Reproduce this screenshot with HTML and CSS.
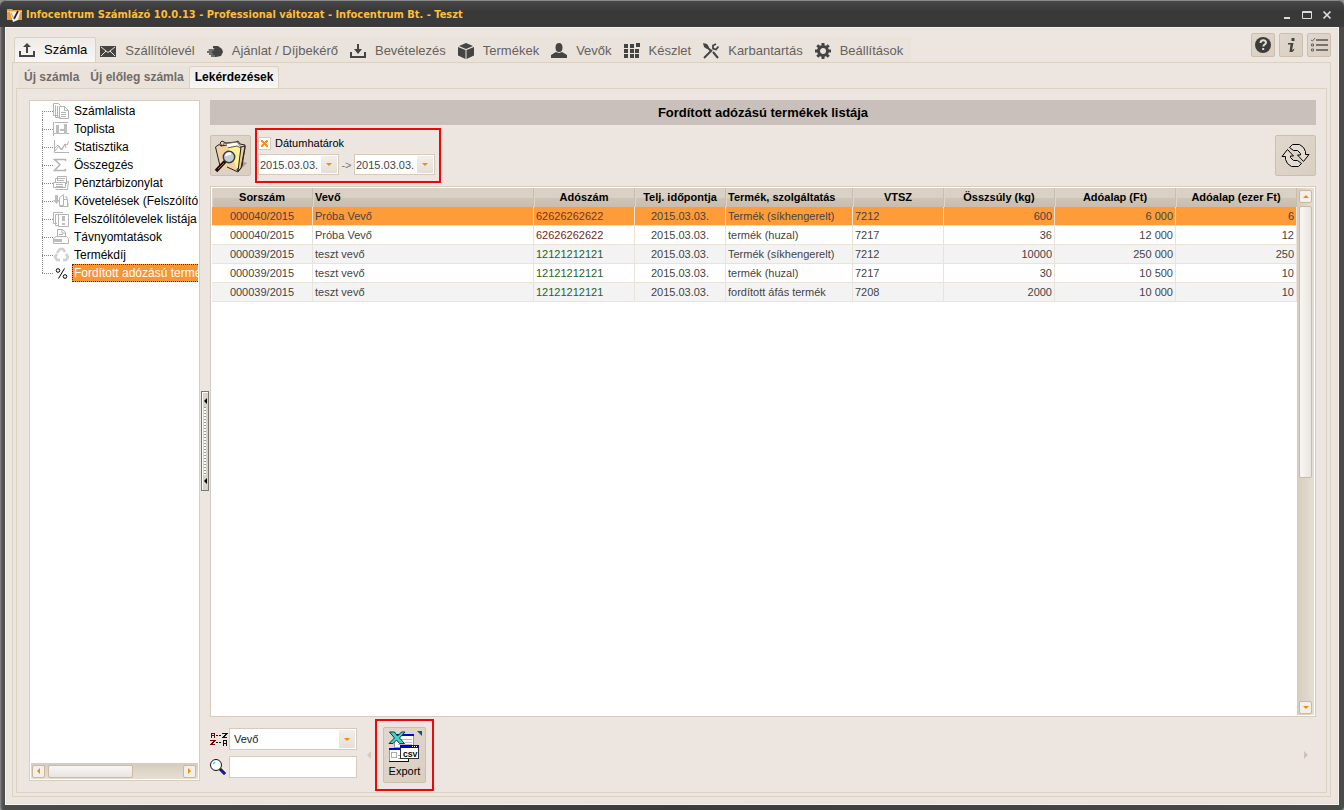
FILE: index.html
```html
<!DOCTYPE html>
<html lang="hu">
<head>
<meta charset="utf-8">
<title>Infocentrum Számlázó</title>
<link rel="stylesheet" href="styles.css">
</head>
<body>
<div class="window">
  <header class="titlebar">
    <svg class="app-icon" width="16" height="16" viewBox="0 0 16 16"><path d="M0 2h5l1 1h9v10H0z" fill="#f39a2e"/><path d="M0 4h15v1H0z" fill="#ffd08a"/><path d="M3 5h10l-2 8-5 2z" fill="#f4f4f4"/><path d="M11 4L7 12" stroke="#222" stroke-width="1.700"/><path d="M4 6l3 6" stroke="#999"/></svg>
    <span class="title">Infocentrum Számlázó 10.0.13 - Professional változat - Infocentrum Bt. - Teszt</span>
    <div class="win-buttons">
      <button type="button" aria-label="Kis méret"><svg width="10" height="10" viewBox="0 0 10 10"><path d="M2 7h6v2H2z" fill="#ddd"/></svg></button>
      <button type="button" aria-label="Teljes méret"><svg width="10" height="10" viewBox="0 0 10 10"><path d="M.5 1.500h9v7h-9zM0 2.500h10" fill="none" stroke="#ddd"/></svg></button>
      <button type="button" aria-label="Bezárás"><svg width="10" height="10" viewBox="0 0 10 10"><path d="M1.500 1.500l7 7m0-7l-7 7" stroke="#ddd" stroke-width="1.700"/></svg></button>
    </div>
  </header>
  <div class="client">
    <div class="menu-row">
      <nav class="main-nav">
        <a href="#" class="active"><svg viewBox="0 0 16 16"><path d="M8 1l4 4H9v6H7V5H4zM0 9h2v4h12V9h2v6H0z"/></svg>Számla</a>
        <a href="#"><svg viewBox="0 0 16 16"><path d="M0 3h16v11H0z"/><path d="M1 4l7 5.500L15 4M1 13l5-5M15 13l-5-5" stroke="#e9e3da" fill="none"/></svg>Szállítólevél</a>
        <a href="#"><svg viewBox="0 0 16 16"><path d="M6 3l5 0 4 3 1 3-2 4-5 1H4v-2H2v-2H0V8h2V6h6L6 5z"/><path d="M1 7h6M0 9h5M2 11h4M4 13h4" stroke="#9d9995"/></svg>Ajánlat / Díjbekérő</a>
        <a href="#"><svg viewBox="0 0 16 16"><path d="M7 1h2v5h3l-4 5-4-5h3zM0 9h2v4h12V9h2v6H0z"/></svg>Bevételezés</a>
        <a href="#"><svg viewBox="0 0 16 16"><path d="M8 0l7 3-7 3-7-3zM0 4l7.500 3v9L0 12.500zM16 4L8.500 7v9l7.500-3.500z"/></svg>Termékek</a>
        <a href="#"><svg viewBox="0 0 16 16"><ellipse cx="8" cy="4.500" rx="3.500" ry="4.500"/><path d="M0 15v-3l5-3 3 1 3-1 5 3v3z"/></svg>Vevők</a>
        <a href="#"><svg viewBox="0 0 16 16"><path d="M0 1h4v4H0zM6 1h4v4H6zM12 0h4v4h-4zM0 6h4v4H0zM6 6h4v4H6zM11 6h4v4h-4zM0 11h4v4H0zM6 11h4v4H6zM11 11h4v4h-4z"/></svg>Készlet</a>
        <a href="#"><svg viewBox="0 0 16 16"><path d="M0 0l4 1 2 3-2 2L1 4z"/><path d="M4 4l4 4M10 9l5 6M1 15l8-8" stroke="#444" stroke-width="2"/><path d="M13 1l-3 1.500v3l3 1 2.500-3" fill="none" stroke="#444" stroke-width="1.800"/></svg>Karbantartás</a>
        <a href="#"><svg viewBox="0 0 16 16"><circle cx="8" cy="8" r="4.500" fill="none" stroke="#444" stroke-width="3"/><path d="M8 0v3M8 13v3M0 8h3M13 8h3M2.300 2.300l2 2M11.700 11.700l2 2M13.700 2.300l-2 2M4.300 11.700l-2 2" stroke="#444" stroke-width="3"/></svg>Beállítások</a>
      </nav>
      <div class="help-buttons">
        <button type="button" class="tool" aria-label="Súgó"><svg width="18" height="18" viewBox="0 0 18 18"><circle cx="9" cy="9" r="8" fill="#3e3c3a"/><path d="M6.500 7c0-3.500 5.500-3.500 5.500-.5 0 2-2.700 2-2.700 4" stroke="#e3dbcf" stroke-width="2" fill="none"/><path d="M8.200 12h2v2h-2z" fill="#e3dbcf"/></svg></button>
        <button type="button" class="tool" aria-label="Információ"><svg width="18" height="18" viewBox="0 0 18 18"><path d="M9.500 2h3v3h-3zM6 7h5.500L10 14l2.500-1.500-1 2.500-1.500 1H7.500L8.500 8.500H6z" fill="#444"/></svg></button>
        <button type="button" class="tool" aria-label="Lista"><svg width="18" height="18" viewBox="0 0 18 18"><path d="M6 4h12M6 9h12M6 14h12" stroke="#555" stroke-width="1.500"/><path d="M1 4l1.500 1L5 2M1.500 8h2v2h-2zM1.500 13h2v2h-2z" fill="none" stroke="#666"/></svg></button>
      </div>
    </div>
    <div class="outer-panel">
      <nav class="sub-nav">
        <a href="#">Új számla</a>
        <a href="#">Új előleg számla</a>
        <a href="#" class="active">Lekérdezések</a>
      </nav>
      <div class="inner-panel">
        <aside class="tree">
          <ul>
            <li><a href="#"><svg viewBox="0 0 16 16"><path d="M5.500 12.500h-5v-12h5l2 2M7.500 14.500h-5v-12M6.500 3.500h5l4 4v8h-9zM11.500 3.500v4h4M8 9.500h5M8 11.500h5M8 13.500h5M4.500 3v12"/></svg><span>Számlalista</span></a></li>
            <li><a href="#"><svg viewBox="0 0 16 16"><path d="M.5 1v14M0 12.500h16M2 1.500h13"/><path class="solid" d="M3 4h3v9H3zM7 8h4v2H7zM11 3h3v10h-3z"/></svg><span>Toplista</span></a></li>
            <li><a href="#"><svg viewBox="0 0 16 16"><path d="M1.500 1v12.500H16M2 12l4-5 3 4 3-6 2 1 2-4M2 9l3-3 3 5 4-6 1 4"/></svg><span>Statisztika</span></a></li>
            <li><a href="#"><svg viewBox="0 0 16 16"><path d="M12.500 4V2.500h-11l5.500 5-5.500 6h11V12" stroke-width="1.500"/></svg><span>Összegzés</span></a></li>
            <li><a href="#"><svg viewBox="0 0 16 16"><path d="M4.500 6V1.500h9V9M2.500 8V3.500h9M6 3.500h6M5 5.500h6M.5 7.500h12v5h-12zM2.500 14.500h12l1-8-3 1M3 9.500h7M3 11.500h7"/></svg><span>Pénztárbizonylat</span></a></li>
            <li><a href="#"><svg viewBox="0 0 16 16"><path class="solid" d="M2 2h3v5h2l-3.500 4L0 7h2z"/><path d="M6.500 4.500l4-3v11h-4zM10.500 6.500h4v7h-8M12 4h2v2M9 13.500h6v-4"/></svg><span>Követelések (Felszólító levelek)</span></a></li>
            <li><a href="#"><svg viewBox="0 0 16 16"><path d="M4 12.500H.5v-11H10M6 14.500H2.500v-11h4M5.500 3.500h10v12h-10z"/><path class="solid" d="M9 5h3v5H9zM9 12h3v2H9z"/></svg><span>Felszólítólevelek listája</span></a></li>
            <li><a href="#"><svg viewBox="0 0 16 16"><path d="M4.500 8V.5h5l3 3V8M9 1v3h3M6 5.500h4M.5 9.500l3-2h10l2 2v5H.5z"/><path class="solid" d="M1 10h8v3H1z"/></svg><span>Távnyomtatások</span></a></li>
            <li><a href="#"><svg viewBox="0 0 16 16"><path d="M4 6l3-4h3l2 3M13 7l2 3-2 3h-3M7 13H4L2 10l2-3" stroke-width="2.500" stroke="#d0d0d0"/></svg><span>Termékdíj</span></a></li>
            <li><a href="#" class="selected"><svg viewBox="0 0 16 16"><path d="M11.500 3.500l-6 10" stroke="#000"/><circle cx="5" cy="5.500" r="1.800" stroke="#000"/><circle cx="12" cy="11.500" r="1.800" stroke="#000"/></svg><span>Fordított adózású termékek listája</span></a></li>
          </ul>
          <div class="scroll-h">
            <button type="button" aria-label="Balra"><i class="tri left"></i></button>
            <div class="thumb"></div>
            <button type="button" class="end" aria-label="Jobbra"><i class="tri right"></i></button>
          </div>
        </aside>
        <div class="splitter"><div class="grip"><i></i><b></b><i></i></div></div>
        <main class="content">
          <h1>Fordított adózású termékek listája</h1>
          <div class="toolbar">
            <button type="button" class="tool big" aria-label="Keresés">
              <svg width="34" height="34" viewBox="0 0 34 34"><path d="M27 22l6 2-7 7z" fill="#a79f94"/><path d="M6 4l2-2 4 2 10-1 2-1 2 3 5 1v3l-3 18-4 5z" fill="#f3d3a6" stroke="#222"/><path d="M9 5l14-2 4 5-2 22-6-2z" fill="#fffef0" stroke="#666"/><path d="M13 9l10-2 4 2v18l-5 4z" fill="#fdf391" stroke="#555"/><path d="M27 8l4-1-4 22-3 3z" fill="#f3cd9b" stroke="#222"/><path d="M1.500 8L5 6l2 1 6-1 10 24-2 2-14-4z" fill="#f3cfa4"/><path d="M6 27L1.500 8 5 5.500l2 1.500 6-1M13 28l11 5 3-4" fill="none" stroke="#222"/><circle cx="15" cy="18" r="5.700" fill="#c6ccd2" stroke="#3d3d3d" stroke-width="1.500"/><path d="M12 17q1-3 5-2" stroke="#fff" stroke-width="2.500" fill="none"/><path d="M11 22.500L2 32" stroke="#111" stroke-width="3.500"/><path d="M10 24l-6 6" stroke="#c0562c"/></svg>
            </button>
            <div class="marked filter">
              <label class="check"><input type="checkbox" checked>Dátumhatárok</label>
              <div class="range">
                <span class="combo date"><select aria-label="Kezdő dátum"><option>2015.03.03.</option></select><i class="drop"></i></span>
                <span class="to">-&gt;</span>
                <span class="combo date"><select aria-label="Záró dátum"><option>2015.03.03.</option></select><i class="drop"></i></span>
              </div>
            </div>
            <button type="button" class="tool big refresh" aria-label="Frissítés">
              <svg width="29" height="23" viewBox="-.5 -.5 29 23"><g fill="#e4dcd0" stroke="#000"><path d="M8 3l3-3h7l4 3 2 4v3h3.500L22 17l-6-6.500h3V9l-3-3h-4z"/><path d="M20 19l-3 3h-7l-4-3-2-4v-3H.5L6 5l6 6.500H9V13l3 3h4z"/></g></svg>
            </button>
          </div>
          <div class="grid">
            <div class="table-area">
              <table>
                <colgroup><col class="w101"><col><col class="w101"><col class="w91"><col class="w127"><col class="w91"><col class="w111"><col class="w121"><col class="w121"></colgroup>
                <thead><tr><th>Sorszám</th><th class="l">Vevő</th><th>Adószám</th><th>Telj. időpontja</th><th class="l">Termék, szolgáltatás</th><th>VTSZ</th><th>Összsúly (kg)</th><th>Adóalap (Ft)</th><th>Adóalap (ezer Ft)</th></tr></thead>
                <tbody>
                  <tr class="current"><td class="c">000040/2015</td><td>Próba Vevő</td><td class="red">62626262622</td><td class="c">2015.03.03.</td><td>Termék (síkhengerelt)</td><td>7212</td><td class="r">600</td><td class="r">6 000</td><td class="r">6</td></tr>
                  <tr><td class="c">000040/2015</td><td>Próba Vevő</td><td class="red">62626262622</td><td class="c">2015.03.03.</td><td>termék (huzal)</td><td>7217</td><td class="r">36</td><td class="r">12 000</td><td class="r">12</td></tr>
                  <tr><td class="c">000039/2015</td><td>teszt vevő</td><td class="green">12121212121</td><td class="c">2015.03.03.</td><td>Termék (síkhengerelt)</td><td>7212</td><td class="r">10000</td><td class="r">250 000</td><td class="r">250</td></tr>
                  <tr><td class="c">000039/2015</td><td>teszt vevő</td><td class="green">12121212121</td><td class="c">2015.03.03.</td><td>termék (huzal)</td><td>7217</td><td class="r">30</td><td class="r">10 500</td><td class="r">10</td></tr>
                  <tr><td class="c">000039/2015</td><td>teszt vevő</td><td class="green">12121212121</td><td class="c">2015.03.03.</td><td>fordított áfás termék</td><td>7208</td><td class="r">2000</td><td class="r">10 000</td><td class="r">10</td></tr>
                </tbody>
              </table>
            </div>
            <div class="scroll-v">
              <button type="button" aria-label="Fel"><i class="tri up"></i></button>
              <div class="thumb"></div>
              <button type="button" class="end" aria-label="Le"><i class="tri down"></i></button>
            </div>
          </div>
          <footer class="bottom">
            <div class="finder">
              <label for="sort" aria-label="Rendezés"><svg width="18" height="16" viewBox="0 0 18 16" fill="none" shape-rendering="crispEdges"><path d="M1.500 7V2.500h3V7M1 4.500h4M0 9.500h5L1 13.500h4" stroke="#800000"/><path d="M12 2.500h5l-4 4h4M13.500 15v-5.500h3V15M13 12.500h4M6 4.500h2M9 4.500h2M6 11.500h2M9 11.500h2" stroke="#111"/></svg></label>
              <span class="combo"><select id="sort"><option>Vevő</option></select><i class="drop"></i></span>
              <label for="search" aria-label="Keresés"><svg width="18" height="18" viewBox="0 0 18 18"><circle cx="6" cy="7" r="5.500" fill="#fff" stroke="#111"/><path d="M3 6l2-2" stroke="#35d5ee" stroke-width="1.500"/><path d="M10 11l5 5" stroke="#111" stroke-width="3"/><path d="M11 12l4 4" stroke="#1c1cb4" stroke-width="2"/></svg></label>
              <input id="search" type="text">
            </div>
            <i class="page prev"></i>
            <div class="marked export-box">
              <button type="button" class="tool export">
                <svg width="34" height="34" viewBox="0 0 34 34"><g shape-rendering="crispEdges"><path d="M6 4h20v14H6z" fill="#fff"/><path d="M6.500 4.500h19v13h-19z" fill="none" stroke="#999"/><path d="M6 4h20v2H6z" fill="#0000e0"/><path d="M10 9.500h14M17 12.500h7M10 14.500h14" stroke="#b8b8b8"/><path d="M1.500 18.500h19v13h-19z" fill="#fff" stroke="#999"/><path d="M1 18h12v2H1z" fill="#0000e0"/><path d="M3.500 22.500h5v5h-5zM10 25.500h8M10 28.500h8" stroke="#aaa" fill="none"/><path d="M20.500 29v2.500H1" stroke="#111" fill="none"/><path d="M12.500 17.500h18v11h-18z" fill="#fff" stroke="#333"/><path d="M12 15h19v3H12z" fill="#0000e0"/><path d="M24 16.500h1M26 16.500h1M28 16.500h1" stroke="#fff"/></g><path d="M29 1h5v5z" fill="#14507c"/><text x="15" y="27" class="csv">CSV</text><path d="M1.500 2h5l3 4 4-4H17l-5.500 6 5 5.500h-5L8.500 10 5 13.500H1L6.500 8z" fill="#45cfc8" stroke="#053c3c"/></svg>
                Export
              </button>
            </div>
            <i class="page next"></i>
          </footer>
        </main>
      </div>
    </div>
  </div>
</div>
</body>
</html>
```
FILE: styles.css
```css
* { box-sizing: border-box; }
body {
  margin: 0;
  font: 11px/14px "Liberation Sans", Arial, sans-serif;
  color: #000;
  background: #8f9090;
}
button, select, input { font: inherit; color: inherit; margin: 0; }
button { padding: 0; cursor: pointer; }
a { color: inherit; text-decoration: none; }
svg { display: block; flex: none; }

.window {
  height: 100vh;
  min-height: 480px;
  display: flex;
  flex-direction: column;
  padding: 0 5px 5px;
  border-radius: 6px 6px 4px 4px;
  background: linear-gradient(90deg, #8a8a8a 0, #555 2px, #4a4a4a 5px, #3b3b3b 50%, #4a4a4a 100%);
}
.titlebar {
  height: 27px;
  flex: none;
  display: flex;
  align-items: center;
  gap: 3px;
  margin: 0 -5px;
  padding: 1px 12px 0 7px;
  border-top: 1px solid #8a8a8a;
  border-radius: 6px 6px 0 0;
  background: linear-gradient(#484848, #383838 40%, #3b3b3b);
}
.title {
  font: bold 11px/14px "DejaVu Sans Condensed", "DejaVu Sans", sans-serif;
  color: #fdbe3a;
}
.win-buttons { display: flex; gap: 10px; margin-left: auto; }
.win-buttons button { border: 0; background: none; }

.client {
  flex: 1;
  min-height: 0;
  display: flex;
  flex-direction: column;
  padding: 5px 7px 7px 6px;
  border: 1px solid #f8f5ee;
  background: #ede5df;
  box-shadow: inset 0 0 3px #e2dccd;
}
.menu-row { height: 29px; flex: none; display: flex; align-items: flex-end; justify-content: space-between; }
.main-nav { display: flex; padding-left: 2px; font-size: 13px; color: #66615e; }
.main-nav a {
  height: 26px;
  margin-bottom: -1px;
  display: flex;
  align-items: center;
  gap: 9px;
  padding: 0 8px 0 4px;
  border: 1px solid transparent;
  border-width: 1px 0 0;
  background: #eae3db;
}
.main-nav svg { width: 16px; height: 16px; fill: #444; }
.main-nav .active, .sub-nav .active {
  position: relative;
  color: #000;
  border: 1px solid #dbd1c1;
  border-radius: 2px 2px 0 0;
  background: linear-gradient(#efebe7, #f8f7f6);
}
.help-buttons { display: flex; gap: 4px; align-self: flex-start; }
.tool {
  width: 24px;
  height: 24px;
  display: flex;
  align-items: center;
  justify-content: center;
  border: 1px solid #cdbfad;
  border-radius: 2px;
  background: linear-gradient(135deg, #e0d8cc, #d9cfc1);
}
.tool.big { width: 41px; height: 41px; }

.outer-panel {
  flex: 1;
  min-height: 0;
  display: flex;
  flex-direction: column;
  padding: 3px;
  border: 1px solid #dcd2c3;
}
.sub-nav { display: flex; height: 22px; flex: none; padding-left: 2px; font-weight: bold; font-size: 12px; color: #716b68; }
.sub-nav a { height: 23px; padding: 0 5px 0 6px; line-height: 22px; background: #eae3db; }
.sub-nav .active { padding: 0 5px; line-height: 20px; z-index: 1; }
.inner-panel {
  flex: 1;
  min-height: 0;
  display: flex;
  padding: 11px 10px 0 12px;
  border: 1px solid #dcd2c3;
}

.tree {
  width: 171px;
  flex: none;
  display: flex;
  flex-direction: column;
  margin-bottom: 11px;
  padding: 1px;
  border: 1px solid #d8cebf;
  background: #fff;
}
.tree ul { flex: 1; min-height: 0; margin: 0; padding: 0 0 0 11px; overflow: hidden; list-style: none; }
.tree li {
  height: 18px;
  font-size: 12px;
  background:
    repeating-linear-gradient(#888 0 1px, transparent 1px 2px) 0 0 / 1px 100% no-repeat,
    repeating-linear-gradient(90deg, #888 0 1px, transparent 1px 2px) 0 9px / 11px 1px no-repeat;
}
.tree li:first-child { background-position: 0 9px, 0 9px; }
.tree li:last-child { background-size: 1px 9px, 11px 1px; }
.tree a { display: flex; align-items: center; gap: 3px; padding-left: 11px; }
.tree svg { width: 16px; height: 16px; fill: none; stroke: #b4b4b4; }
.tree .solid { fill: #bdbdbd; stroke: none; }
.tree a span {
  min-width: 0;
  height: 18px;
  overflow: hidden;
  padding-left: 1px;
  line-height: 18px;
  border-left: 1px solid transparent;
  white-space: nowrap;
}
.tree .selected span { color: #fff; line-height: 16px; border: 1px dotted #234; border-right: 0; background: #f79433; }

.scroll-h, .scroll-v { flex: none; display: flex; gap: 3px; background: linear-gradient(#d5ccbd, #e6dfd2); }
.scroll-h { height: 16px; align-items: center; padding: 0 2px 0 1px; }
.scroll-v { width: 17px; flex-direction: column; align-items: center; padding: 2px 0 1px; background: linear-gradient(90deg, #d5ccbd, #e6dfd2); }
.scroll-h button, .scroll-v button {
  width: 13px;
  height: 13px;
  flex: none;
  display: flex;
  align-items: center;
  justify-content: center;
  border: 1px solid #c9b79f;
  border-radius: 2px;
  background: #f3efea;
}
.scroll-h .end { margin-left: auto; }
.scroll-v .end { margin-top: auto; }
.thumb { border: 1px solid #c9b9a5; border-radius: 2px; background: linear-gradient(#f8f6f5, #e9e4df); }
.scroll-h .thumb { width: 85px; height: 13px; }
.scroll-v .thumb { width: 13px; height: 52%; flex: none; background: linear-gradient(90deg, #f8f6f5, #e9e4df); }
.tri { width: 0; height: 0; border: 3px solid transparent; }
.left { border-right-color: #f58a07; border-left: 0; }
.right { border-left-color: #f58a07; border-right: 0; }
.up { border-bottom-color: #f58a07; border-top: 0; }
.down { border-top-color: #f58a07; border-bottom: 0; }

.splitter { width: 10px; flex: none; display: flex; align-items: center; padding: 0 1px; margin-bottom: 11px; }
.grip {
  width: 8px;
  height: 100px;
  display: flex;
  flex-direction: column;
  align-items: center;
  justify-content: space-between;
  padding: 6px 0;
  border: 1px solid #777;
  box-shadow: inset 1px 1px #fff;
  background: #d9d2c8;
}
.grip i { border: 3px solid transparent; border-right-color: #000; border-left: 0; }
.grip b { width: 2px; height: 68px; background: repeating-linear-gradient(#999 0 1px, #fff 1px 3px); }

.content { flex: 1; min-width: 0; display: flex; flex-direction: column; }
h1 { margin: 0; text-align: center; font-size: 13px; line-height: 25px; background: #c9c0bb; }
.toolbar { display: flex; align-items: center; gap: 4px; margin: 3px 0; }
.refresh { margin-left: auto; }
.marked { border: 2px solid #ee0707; }
.filter { height: 55px; padding: 6px 4px 0 1px; }
.check { display: flex; align-items: center; gap: 4px; height: 14px; }
.check input {
  appearance: none;
  width: 13px;
  height: 13px;
  border: 1px solid #d5cabb;
  background:
    linear-gradient(45deg, transparent 40%, #f5922a 40% 60%, transparent 60%) center / 7px 7px no-repeat,
    linear-gradient(-45deg, transparent 40%, #f5922a 40% 60%, transparent 60%) center / 7px 7px no-repeat,
    #fff;
}
.range { display: flex; align-items: center; margin-top: 4px; }
.to { width: 15px; text-align: center; color: #777; }
.combo { position: relative; display: block; height: 21px; }
.combo select, .finder input {
  appearance: none;
  width: 100%;
  height: 100%;
  padding: 0 4px;
  border: 1px solid #d5cabb;
  border-radius: 0;
  outline: 0;
  color: #222;
  background: #fff;
}
.date { width: 81px; }
.date select { padding: 0 1px; color: #444; }
.drop {
  position: absolute;
  top: 2px;
  right: 2px;
  bottom: 2px;
  width: 16px;
  display: flex;
  align-items: center;
  justify-content: center;
  background: linear-gradient(#f2eeea, #e5dfd7);
  pointer-events: none;
}
.drop::before { content: ""; border: 3px solid transparent; border-top-color: #f58a07; border-bottom: 0; }

.grid {
  flex: 1;
  min-height: 0;
  display: flex;
  padding: 1px;
  border: 1px solid #d6ccbc;
  background: #fff;
}
.table-area { flex: 1; min-width: 0; overflow: hidden; }
table { width: 100%; table-layout: fixed; border-collapse: separate; border-spacing: 0; color: #444; }
.w91 { width: 91px; }
.w101 { width: 101px; }
.w111 { width: 111px; }
.w121 { width: 121px; }
.w127 { width: 127px; }
th, td { height: 19px; overflow: hidden; padding: 0 2px; line-height: 18px; white-space: nowrap; text-align: left; }
th {
  padding-bottom: 1px;
  text-align: center;
  color: #000;
  border-right: 1px solid #c8beb0;
  box-shadow: inset 1px 0 #ddd5c9;
  background: linear-gradient(#d9d1c6 50%, #cfc5b6 50%, #c8bdae);
}
th.l { text-align: left; }
td { border-right: 1px solid #e9e3da; border-bottom: 1px solid #e9e3da; }
tbody tr:nth-child(odd) { background: #f3f3f3; }
tbody tr.current { background: #ff9c3a; }
.c { text-align: center; }
.r { text-align: right; }
.red { color: #702a22; }
.green { color: #266329; }
.current .red { color: #7b321c; }

.bottom { height: 72px; flex: none; display: flex; align-items: center; margin: 2px 0 1px; }
.finder { display: grid; grid-template-columns: 19px 128px; grid-template-rows: 22px 22px; gap: 6px 0; align-items: center; padding-bottom: 4px; }
.finder .combo, .finder input { height: 22px; }
.page { border: 4px solid transparent; }
.prev { margin-left: 10px; border-right-color: #d4c9bb; border-left: 0; }
.next { margin: 0 8px 0 auto; border-left-color: #cfc3b5; border-right: 0; }
.export-box { height: 72px; margin-left: 4px; padding: 6px; }
.tool.export { width: 43px; height: 56px; flex-direction: column; justify-content: flex-start; padding-top: 2px; }
.csv { font: bold 8px "Liberation Mono", monospace; fill: #000; }
```
